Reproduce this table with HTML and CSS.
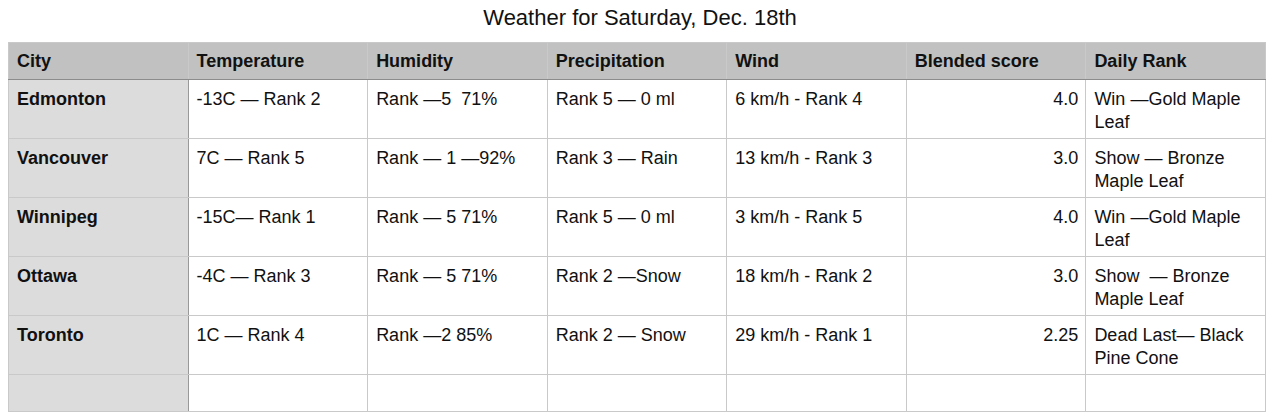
FILE: index.html
```html
<!DOCTYPE html>
<html>
<head>
<meta charset="utf-8">
<link rel="stylesheet" href="styles.css">
</head>
<body>
<div class="page">
  <h1 class="title">Weather for Saturday, Dec. 18th</h1>
  <table class="weather">
    <thead>
      <tr class="head-row">
        <th>City</th><th>Temperature</th><th>Humidity</th><th>Precipitation</th><th>Wind</th><th>Blended score</th><th>Daily Rank</th>
      </tr>
    </thead>
    <tbody>
      <tr class="data-row">
        <th class="city">Edmonton</th><td>-13C — Rank 2</td><td>Rank —5&nbsp; 71%</td><td>Rank 5 — 0 ml</td><td>6 km/h - Rank 4</td><td class="num">4.0</td><td>Win —Gold Maple Leaf</td>
      </tr>
      <tr class="data-row">
        <th class="city">Vancouver</th><td>7C — Rank 5</td><td>Rank — 1 —92%</td><td>Rank 3 — Rain</td><td>13 km/h - Rank 3</td><td class="num">3.0</td><td>Show — Bronze Maple Leaf</td>
      </tr>
      <tr class="data-row">
        <th class="city">Winnipeg</th><td>-15C— Rank 1</td><td>Rank — 5 71%</td><td>Rank 5 — 0 ml</td><td>3 km/h - Rank 5</td><td class="num">4.0</td><td>Win —Gold Maple Leaf</td>
      </tr>
      <tr class="data-row">
        <th class="city">Ottawa</th><td>-4C — Rank 3</td><td>Rank — 5 71%</td><td>Rank 2 —Snow</td><td>18 km/h - Rank 2</td><td class="num">3.0</td><td>Show&nbsp; — Bronze Maple Leaf</td>
      </tr>
      <tr class="data-row">
        <th class="city">Toronto</th><td>1C — Rank 4</td><td>Rank —2 85%</td><td>Rank 2 — Snow</td><td>29 km/h - Rank 1</td><td class="num">2.25</td><td>Dead Last— Black Pine Cone</td>
      </tr>
      <tr class="empty-row">
        <th class="city"></th><td></td><td></td><td></td><td></td><td></td><td></td>
      </tr>
    </tbody>
  </table>
</div>
</body>
</html>
```
FILE: styles.css
```css
html, body {
  margin: 0;
  padding: 0;
  background: #ffffff;
}

.page {
  padding: 0 8px;
  font-family: "Liberation Sans", Arial, Helvetica, sans-serif;
  color: #111111;
}

.title {
  margin: 0;
  height: 42px;
  line-height: 36px;
  font-size: 22px;
  font-weight: normal;
  text-align: center;
  color: #111111;
}

.weather {
  width: 1258px;
  table-layout: fixed;
  border-collapse: collapse;
  font-size: 18px;
  line-height: 23px;
  border: 1px solid #c9c9c9;
}

.weather th,
.weather td {
  border: 1px solid #c9c9c9;
  padding: 8px 8px 4px 8px;
  vertical-align: top;
  text-align: left;
}

.weather th {
  font-weight: bold;
}

.head-row {
  height: 37px;
}

.head-row th {
  background: #c0c1c0;
  border-bottom: 1px solid #8c8c8c;
  padding-top: 7px;
}

.data-row {
  height: 58.7px;
}

.empty-row {
  height: 37px;
}

.weather .city {
  background: #dcdcdc;
  border-right: 1px solid #999999;
}

.weather .num {
  text-align: right;
  padding-right: 7px;
}
```
